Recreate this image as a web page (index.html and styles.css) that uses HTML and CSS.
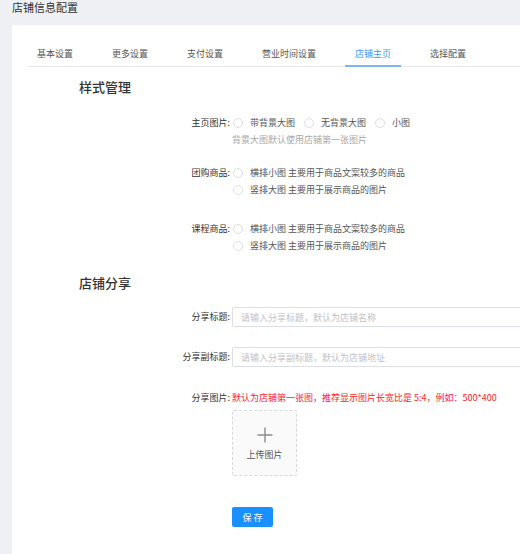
FILE: index.html
```html
<!DOCTYPE html>
<html lang="zh-CN">
<head>
<meta charset="utf-8">
<title>店铺信息配置</title>
<link rel="stylesheet" href="styles.css">
</head>
<body>
<div class="page-title">店铺信息配置</div>
<div class="card">
  <div class="tabs">
    <div class="tab">基本设置</div>
    <div class="tab">更多设置</div>
    <div class="tab">支付设置</div>
    <div class="tab">营业时间设置</div>
    <div class="tab active">店铺主页</div>
    <div class="tab">选择配置</div>
  </div>

  <div class="section-title first">样式管理</div>

  <div class="row row-home">
    <div class="label">主页图片:</div>
    <div class="control">
      <div class="line">
        <span class="radio"></span><span class="opt">带背景大图</span>
        <span class="radio"></span><span class="opt">无背景大图</span>
        <span class="radio"></span><span class="opt">小图</span>
      </div>
      <div class="line hint">背景大图默认使用店铺第一张图片</div>
    </div>
  </div>

  <div class="row row-group">
    <div class="label">团购商品:</div>
    <div class="control">
      <div class="line"><span class="radio"></span><span class="opt">横排小图 主要用于商品文案较多的商品</span></div>
      <div class="line"><span class="radio"></span><span class="opt">竖排大图 主要用于展示商品的图片</span></div>
    </div>
  </div>

  <div class="row row-course">
    <div class="label">课程商品:</div>
    <div class="control">
      <div class="line"><span class="radio"></span><span class="opt">横排小图 主要用于商品文案较多的商品</span></div>
      <div class="line"><span class="radio"></span><span class="opt">竖排大图 主要用于展示商品的图片</span></div>
    </div>
  </div>

  <div class="section-title second">店铺分享</div>

  <div class="row row-input row-title">
    <div class="label">分享标题:</div>
    <div class="control"><input class="input" type="text" placeholder="请输入分享标题，默认为店铺名称"></div>
  </div>

  <div class="row row-input row-subtitle">
    <div class="label">分享副标题:</div>
    <div class="control"><input class="input" type="text" placeholder="请输入分享副标题，默认为店铺地址"></div>
  </div>

  <div class="row row-pic">
    <div class="label">分享图片:</div>
    <div class="control">
      <div class="line warn">默认为店铺第一张图，推荐显示图片长宽比是 5:4，例如：500*400</div>
      <div class="upload">
        <svg class="plus" width="16" height="16" viewBox="0 0 16 16"><path d="M8 0.5V15.5M0.5 8H15.5" stroke="#8c8c8c" stroke-width="1.4" fill="none"/></svg>
        <div class="upload-text">上传图片</div>
      </div>
    </div>
  </div>

  <div class="row row-save">
    <div class="label"></div>
    <div class="control"><button class="btn-save">保 存</button></div>
  </div>
</div>
</body>
</html>
```
FILE: styles.css
```css
html, body {
  margin: 0;
  padding: 0;
  height: 100%;
  overflow: hidden;
}
body {
  background: #eef0f3;
  font-family: "Noto Sans CJK SC", "Liberation Sans", sans-serif;
  font-size: 9px;
  color: #333;
}
.page-title {
  height: 25px;
  line-height: 14px;
  padding-left: 12px;
  font-size: 11px;
  color: #333;
}
.card {
  margin-left: 12px;
  background: #fff;
  height: 529px;
  padding-top: 17px;
  box-sizing: border-box;
  overflow: hidden;
}
.tabs {
  display: flex;
  gap: 19px;
  margin-left: 15px;
  border-bottom: 1px solid #e6e8eb;
  height: 24px;
}
.tab {
  padding: 0 10px;
  line-height: 24px;
  color: #555;
  white-space: nowrap;
  position: relative;
}
.tab.active {
  color: #3d95f5;
}
.tab.active::after {
  content: "";
  position: absolute;
  left: 0;
  right: 0;
  bottom: -1px;
  height: 2px;
  background: #7ab6f7;
}
.section-title {
  padding-left: 67px;
  font-size: 13px;
  font-weight: 500;
  line-height: 18px;
  color: #333;
}
.section-title.first { margin-top: 11px; }
.section-title.second { margin-top: 20px; }

.row {
  display: flex;
}
.label {
  width: 220px;
  flex: none;
  text-align: right;
  line-height: 17px;
  color: #333;
  white-space: nowrap;
  padding-right: 2px;
  box-sizing: border-box;
}
.control {
  flex: 1;
  min-width: 0;
}
.line {
  display: flex;
  align-items: center;
  height: 17px;
  white-space: nowrap;
  color: #555;
}
.radio {
  width: 10px;
  height: 10px;
  border: 1px solid #dcdfe6;
  border-radius: 50%;
  box-sizing: border-box;
  margin-left: 1px;
  margin-right: 7px;
  flex: none;
}
.opt {
  margin-right: 8px;
}
.hint {
  color: #a8a8a8;
}
.row-home { margin-top: 18px; }
.row-group { margin-top: 16px; }
.row-course { margin-top: 22px; }

.row-input .label { line-height: 20px; }
.row-title { margin-top: 15px; }
.row-subtitle { margin-top: 20px; }
.input {
  display: block;
  width: 320px;
  height: 20px;
  border: 1px solid #dcdfe6;
  border-radius: 2px;
  padding: 0 8px;
  box-sizing: border-box;
  font-family: inherit;
  font-size: 9px;
  color: #333;
  outline: none;
}
.input::placeholder {
  color: #bfc2c8;
}
.row-pic { margin-top: 22px; }
.warn {
  color: #ff2424;
}
.upload {
  margin-top: 4px;
  width: 65px;
  height: 66px;
  border: 1px dashed #d9d9d9;
  border-radius: 2px;
  background: #fafafa;
  box-sizing: border-box;
  display: flex;
  flex-direction: column;
  align-items: center;
}
.plus {
  margin-top: 16px;
  display: block;
}
.upload-text {
  margin-top: 6px;
  color: #555;
  line-height: 12px;
}
.row-save { margin-top: 31px; }
.btn-save {
  width: 41px;
  height: 20px;
  border: none;
  border-radius: 2px;
  background: #1890ff;
  color: #fff;
  font-family: inherit;
  font-size: 9px;
  padding: 0;
  cursor: pointer;
}
```
